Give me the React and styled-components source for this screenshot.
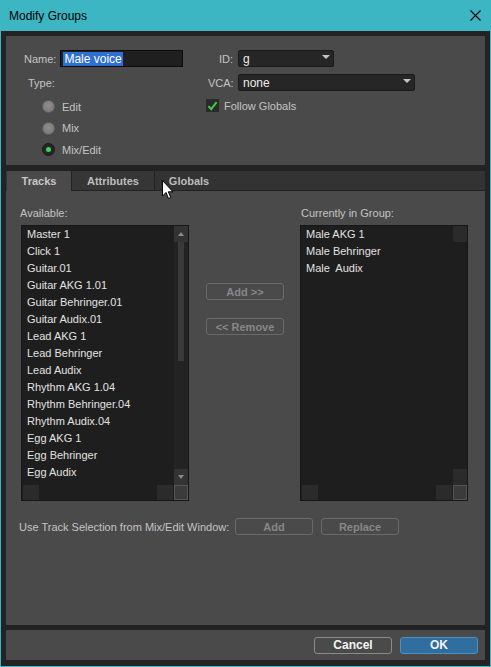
import React from "react";
import styled, { createGlobalStyle } from "styled-components";

const Global = createGlobalStyle`
  html, body { margin: 0; padding: 0; background: #3cb6c3; }
  * { box-sizing: border-box; }
  body { font-family: "Liberation Sans", Arial, sans-serif; font-size: 11px; }
`;

const Window = styled.div`
  position: relative;
  width: 491px;
  height: 667px;
  background: #3cb6c3;
  padding: 0 1px 1px 1px;
  display: flex;
  flex-direction: column;
  overflow: hidden;
`;

const TitleBar = styled.div`
  height: 31px;
  flex: none;
  display: flex;
  align-items: center;
  justify-content: space-between;
  padding: 0 9px 0 8px;
  color: #000;
  font-family: "Liberation Sans", Arial, sans-serif;
  font-size: 12px;
`;

const Body = styled.div`
  flex: 1;
  background: #232323;
  padding: 5px 5px 6px 5px;
  display: flex;
  flex-direction: column;
  gap: 5px;
`;

const Panel = styled.div`
  background: #4a4a4a;
  border-radius: 1px;
`;

const TopPanel = styled(Panel)`
  height: 129px;
  flex: none;
  padding: 14px 0 0 18px;
  display: flex;
`;

const LeftCol = styled.div`
  width: 184px;
  display: flex;
  flex-direction: column;
`;

const RightCol = styled.div`
  display: flex;
  flex-direction: column;
`;

const Label = styled.span`
  color: #c4c4c4;
  white-space: nowrap;
`;

const FormRow = styled.div`
  display: flex;
  align-items: center;
  height: 17px;
  margin-top: ${(p) => p.$mt || 0}px;
  gap: ${(p) => p.$gap || 4}px;
`;

const RightLabel = styled(Label)`
  width: 25px;
  text-align: right;
`;

const TextInput = styled.div`
  width: 123px;
  height: 17px;
  background: #1f1f1f;
  border: 1px solid #0c0c0c;
  padding: 1px 2px;
  display: flex;
  align-items: center;
`;

const Selected = styled.span`
  background: #2e6fd1;
  color: #fff;
  font-size: 12px;
  line-height: 14px;
  padding: 0 1px;
`;

const TypeLabel = styled(Label)`
  padding-left: 4px;
  height: 17px;
  display: flex;
  align-items: center;
  margin-top: 7px;
`;

const RadioList = styled.div`
  display: flex;
  flex-direction: column;
  padding-left: 18px;
  margin-top: 5px;
`;

const RadioRow = styled.div`
  display: flex;
  align-items: center;
  height: 21.5px;
  gap: 7px;
`;

const RadioDot = styled.span`
  width: 13px;
  height: 13px;
  border-radius: 50%;
  background: ${(p) => (p.$on ? "#262626" : "radial-gradient(circle at 50% 40%, #8e8e8e, #747474)")};
  border: 1px solid ${(p) => (p.$on ? "#1a1a1a" : "#606060")};
  display: flex;
  align-items: center;
  justify-content: center;
  &::after {
    content: "";
    display: ${(p) => (p.$on ? "block" : "none")};
    width: 5px;
    height: 5px;
    border-radius: 50%;
    background: #41d15a;
  }
`;

const Dropdown = styled.div`
  position: relative;
  width: ${(p) => p.$w}px;
  height: 17px;
  background: #262626;
  border: 1px solid #1a1a1a;
  border-radius: 2px;
  color: #ececec;
  font-size: 12px;
  display: flex;
  align-items: center;
  padding-left: 4px;
  &::after {
    content: "";
    position: absolute;
    right: 3px;
    top: 4px;
    border-left: 4px solid transparent;
    border-right: 4px solid transparent;
    border-top: 4px solid #c4c4c4;
  }
`;

const CheckRow = styled.div`
  display: flex;
  align-items: center;
  gap: 5px;
  margin-top: 8px;
  margin-left: -2px;
`;

const CheckBox = styled.span`
  width: 13px;
  height: 13px;
  background: #2a2a2a;
  display: flex;
  align-items: center;
  justify-content: center;
`;

const TabPanel = styled(Panel)`
  flex: 1;
  display: flex;
  flex-direction: column;
`;

const TabStrip = styled.div`
  height: 21px;
  background: #333;
  border-top: 1px solid #222;
  display: flex;
  padding-left: 1px;
`;

const Tab = styled.div`
  width: ${(p) => p.$w}px;
  height: 20px;
  display: flex;
  align-items: center;
  justify-content: center;
  font-weight: bold;
  color: ${(p) => (p.$active ? "#c6c6c6" : "#bdbdbd")};
  background: ${(p) => (p.$active ? "#4a4a4a" : "#363636")};
  border-right: 1px solid #222;
  border-bottom: ${(p) => (p.$active ? "none" : "1px solid #222")};
  ${(p) => p.$last && "border-right: none; background: transparent;"}
`;

const TabFill = styled.div`
  flex: 1;
  border-bottom: 1px solid #222;
`;

const TabContent = styled.div`
  flex: 1;
  padding: 15px 0 0 14px;
  display: flex;
  flex-direction: column;
`;

const ListsRow = styled.div`
  display: flex;
`;

const ListCol = styled.div`
  display: flex;
  flex-direction: column;
  gap: 5px;
`;

const ListLabel = styled(Label)`
  line-height: 14px;
  padding-left: ${(p) => p.$pl || 0}px;
`;

const ListBox = styled.div`
  margin-left: ${(p) => p.$ml || 0}px;
  width: 168px;
  height: 276px;
  background: #1e1e1e;
  border: 1px solid #161616;
  display: grid;
  grid-template-columns: 1fr 14px;
  grid-template-rows: 1fr 15px;
`;

const Items = styled.div`
  overflow: hidden;
  padding-left: 5px;
`;

const Item = styled.div`
  height: 17px;
  line-height: 16px;
  color: #e2e2e2;
  white-space: pre;
`;

const VScroll = styled.div`
  display: flex;
  flex-direction: column;
  justify-content: space-between;
  background: ${(p) => (p.$track ? "#232323" : "transparent")};
`;

const ScrollBtn = styled.div`
  height: 16px;
  background: ${(p) => (p.$arrow ? "#333" : "#2b2b2b")};
  position: relative;
  &::after {
    content: "";
    display: ${(p) => (p.$arrow ? "block" : "none")};
    position: absolute;
    left: 4px;
    top: 6px;
    border-left: 3px solid transparent;
    border-right: 3px solid transparent;
    ${(p) => (p.$arrow === "up" ? "border-bottom: 4px solid #8a8a8a;" : "border-top: 4px solid #8a8a8a;")}
  }
`;

const Track = styled.div`
  flex: 1;
  display: flex;
  justify-content: center;
`;

const Thumb = styled.div`
  width: 6px;
  height: 119px;
  background: #3a3a3a;
`;

const HScroll = styled.div`
  display: flex;
  justify-content: space-between;
  padding: 0 1px 0 1px;
`;

const HBtn = styled.div`
  width: 16px;
  height: 15px;
  background: #2b2b2b;
`;

const Corner = styled.div`
  background: #3b3b3b;
  border: 1px solid #555;
`;

const MidCol = styled.div`
  width: 78px;
  margin: 0 16px 0 17px;
  display: flex;
  flex-direction: column;
`;

const Button = styled.div`
  width: 78px;
  height: 17px;
  margin-top: ${(p) => p.$mt || 0}px;
  border-radius: 3px;
  border: 1px solid ${(p) => (p.$primary ? "#4c90c6" : p.$enabled ? "#8a8a8a" : "#6a6a6a")};
  background: ${(p) => (p.$primary ? "#2f6e9e" : "transparent")};
  color: ${(p) => (p.$primary || p.$enabled ? "#f4f4f4" : "#878787")};
  font-weight: bold;
  font-size: ${(p) => (p.$primary || p.$enabled ? 12 : 11)}px;
  display: flex;
  align-items: center;
  justify-content: center;
  white-space: nowrap;
`;

const SelectionRow = styled.div`
  display: flex;
  align-items: center;
  margin-top: 17px;
  gap: 8px;
`;

const SelLabel = styled(Label)`
  width: 208px;
  margin-left: -1px;
`;

const BottomBar = styled(Panel)`
  height: 30px;
  flex: none;
  display: flex;
  align-items: center;
  justify-content: flex-end;
  gap: 8px;
  padding-right: 7px;
`;

const Cursor = styled.svg`
  position: absolute;
  left: 162px;
  top: 180px;
`;

const available = [
  "Master 1",
  "Click 1",
  "Guitar.01",
  "Guitar AKG 1.01",
  "Guitar Behringer.01",
  "Guitar Audix.01",
  "Lead AKG 1",
  "Lead Behringer",
  "Lead Audix",
  "Rhythm AKG 1.04",
  "Rhythm Behringer.04",
  "Rhythm Audix.04",
  "Egg AKG 1",
  "Egg Behringer",
  "Egg Audix",
  "Pedals AKG 1.03",
];

const inGroup = ["Male AKG 1", "Male Behringer", "Male  Audix"];

export default function App() {
  return (
    <>
      <Global />
      <Window>
        <TitleBar>
          <span>Modify Groups</span>
          <svg width="11" height="11" viewBox="0 0 11 11">
            <path d="M0.5 0.5 L10.5 10.5 M10.5 0.5 L0.5 10.5" stroke="#000" strokeWidth="1.1" />
          </svg>
        </TitleBar>
        <Body>
          <TopPanel>
            <LeftCol>
              <FormRow>
                <Label>Name:</Label>
                <TextInput>
                  <Selected>Male voice</Selected>
                </TextInput>
              </FormRow>
              <TypeLabel>Type:</TypeLabel>
              <RadioList>
                {["Edit", "Mix", "Mix/Edit"].map((t) => (
                  <RadioRow key={t}>
                    <RadioDot $on={t === "Mix/Edit"} />
                    <Label>{t}</Label>
                  </RadioRow>
                ))}
              </RadioList>
            </LeftCol>
            <RightCol>
              <FormRow $gap={5}>
                <RightLabel>ID:</RightLabel>
                <Dropdown $w={96}>g</Dropdown>
              </FormRow>
              <FormRow $gap={5} $mt={7}>
                <RightLabel>VCA:</RightLabel>
                <Dropdown $w={177}>none</Dropdown>
              </FormRow>
              <CheckRow>
                <CheckBox>
                  <svg width="11" height="10" viewBox="0 0 11 10">
                    <path d="M1.5 5.2 L4.2 8.2 L9.6 1.2" stroke="#3fca4f" strokeWidth="2" fill="none" />
                  </svg>
                </CheckBox>
                <Label>Follow Globals</Label>
              </CheckRow>
            </RightCol>
          </TopPanel>

          <TabPanel>
            <TabStrip>
              <Tab $active $w={65}>Tracks</Tab>
              <Tab $w={83}>Attributes</Tab>
              <Tab $last $w={68}>Globals</Tab>
              <TabFill />
            </TabStrip>
            <TabContent>
              <ListsRow>
                <ListCol>
                  <ListLabel>Available:</ListLabel>
                  <ListBox $ml={1}>
                    <Items>
                      {available.map((a) => (
                        <Item key={a}>{a}</Item>
                      ))}
                    </Items>
                    <VScroll $track>
                      <ScrollBtn $arrow="up" />
                      <Track>
                        <Thumb />
                      </Track>
                      <ScrollBtn $arrow="down" />
                    </VScroll>
                    <HScroll>
                      <HBtn />
                      <HBtn />
                    </HScroll>
                    <Corner />
                  </ListBox>
                </ListCol>
                <MidCol>
                  <Button $mt={77}>Add &gt;&gt;</Button>
                  <Button $mt={18}>&lt;&lt; Remove</Button>
                </MidCol>
                <ListCol>
                  <ListLabel $pl={1}>Currently in Group:</ListLabel>
                  <ListBox>
                    <Items>
                      {inGroup.map((a) => (
                        <Item key={a}>{a}</Item>
                      ))}
                    </Items>
                    <VScroll>
                      <ScrollBtn />
                      <ScrollBtn />
                    </VScroll>
                    <HScroll>
                      <HBtn />
                      <HBtn />
                    </HScroll>
                    <Corner />
                  </ListBox>
                </ListCol>
              </ListsRow>
              <SelectionRow>
                <SelLabel>Use Track Selection from Mix/Edit Window:</SelLabel>
                <Button>Add</Button>
                <Button>Replace</Button>
              </SelectionRow>
            </TabContent>
          </TabPanel>

          <BottomBar>
            <Button $enabled>Cancel</Button>
            <Button $primary>OK</Button>
          </BottomBar>
        </Body>
        <Cursor width="13" height="20" viewBox="0 0 13 20">
          <path d="M0.5 0.5 L0.5 16 L4 12.5 L6.5 18.5 L8.8 17.5 L6.3 11.8 L11 11.8 Z" fill="#fff" stroke="#000" strokeWidth="1" />
        </Cursor>
      </Window>
    </>
  );
}
